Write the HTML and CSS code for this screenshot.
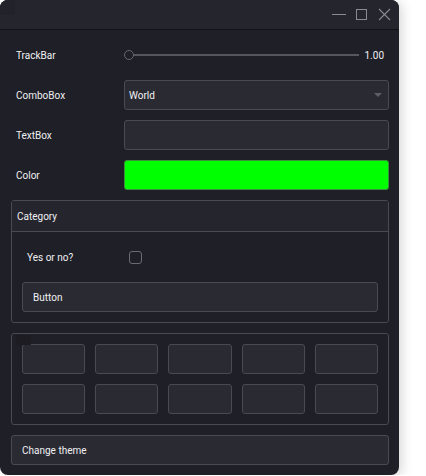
FILE: index.html
```html
<!DOCTYPE html>
<html>
<head>
<meta charset="utf-8">
<link rel="stylesheet" href="styles.css">
</head>
<body>
<div class="window">
  <div class="titlebar">
    <span class="app-icon"></span>
    <svg class="winctl" width="62" height="29" viewBox="0 0 62 29">
      <line x1="3" y1="14.5" x2="17" y2="14.5" stroke="#8a8a92" stroke-width="1"/>
      <rect x="27.5" y="9.5" width="10" height="10" fill="none" stroke="#8a8a92" stroke-width="1"/>
      <path d="M50 9 L61 20 M61 9 L50 20" stroke="#8a8a92" stroke-width="1.1" fill="none"/>
    </svg>
  </div>
  <div class="content">
    <div class="row">
      <span class="label">TrackBar</span>
      <div class="trackbar">
        <span class="thumb"></span>
        <span class="track"></span>
        <span class="value">1.00</span>
      </div>
    </div>
    <div class="row">
      <span class="label">ComboBox</span>
      <div class="box combo">
        <span>World</span>
        <svg class="arrow" width="8" height="5" viewBox="0 0 8 5"><path d="M0 0 L8 0 L4 4 Z" fill="#5e5e66"/></svg>
      </div>
    </div>
    <div class="row">
      <span class="label">TextBox</span>
      <div class="box"></div>
    </div>
    <div class="row">
      <span class="label">Color</span>
      <div class="box color"></div>
    </div>
    <div class="panel">
      <div class="panel-header">Category</div>
      <div class="panel-body">
        <div class="row inner">
          <span class="label">Yes or no?</span>
          <span class="check-wrap"><span class="checkbox"></span></span>
        </div>
        <div class="box btn">Button</div>
      </div>
    </div>
    <div class="panel">
      <span class="panel-mark"></span>
      <div class="panel-body grid">
        <div class="box"></div><div class="box"></div><div class="box"></div><div class="box"></div><div class="box"></div>
        <div class="box"></div><div class="box"></div><div class="box"></div><div class="box"></div><div class="box"></div>
      </div>
    </div>
    <div class="box btn theme">Change theme</div>
  </div>
</div>
</body>
</html>
```
FILE: styles.css
```css
html, body {
  margin: 0;
  padding: 0;
  background: #ffffff;
}
body {
  font-family: Roboto, "Noto Sans", sans-serif;
  font-size: 10px;
  color: #f0f0f2;
}
.window {
  width: 399px;
  height: 475px;
  box-sizing: border-box;
  background: #1f1f27;
  border-radius: 8px;
  box-shadow: 3px 2px 12px rgba(0, 0, 0, 0.16);
  overflow: hidden;
  display: flex;
  flex-direction: column;
}
.titlebar {
  height: 29px;
  background: #25252e;
  border-bottom: 1px solid #121216;
  display: flex;
  align-items: flex-start;
  justify-content: space-between;
  flex-shrink: 0;
}
.app-icon {
  width: 15px;
  height: 15px;
  background: #22222a;
}
.winctl {
  margin-right: 8px;
  display: block;
}
.content {
  flex: 1;
  padding: 10px 10px 10px 11px;
  display: flex;
  flex-direction: column;
  gap: 10px;
}
.row {
  display: grid;
  grid-template-columns: 113px 1fr;
  align-items: center;
  height: 30px;
}
.label {
  padding-left: 5px;
}
.box {
  height: 30px;
  box-sizing: border-box;
  border: 1px solid #4a4a52;
  border-radius: 3px;
  background: #2a2a33;
}
.trackbar {
  display: flex;
  align-items: center;
  height: 30px;
  padding-right: 5px;
}
.thumb {
  width: 10px;
  height: 10px;
  box-sizing: border-box;
  border: 1.5px solid #65656d;
  border-radius: 50%;
  background: #1f1f27;
  flex-shrink: 0;
}
.track {
  flex: 1;
  height: 2px;
  background: #56565e;
}
.value {
  margin-left: 6px;
}
.combo {
  display: flex;
  align-items: center;
  justify-content: space-between;
  padding: 0 6px 0 4px;
}
.arrow {
  display: block;
}
.color {
  background: #00ff00;
  border-color: #3b8f3b;
}
.panel {
  border: 1px solid #4a4a52;
  border-radius: 3px;
  position: relative;
}
.panel-mark {
  position: absolute;
  left: 4px;
  top: 1px;
  width: 15px;
  height: 10px;
  background: #1e1c23;
}
.panel-header {
  height: 30px;
  display: flex;
  align-items: center;
  padding-left: 5px;
  background: #25252e;
  border-bottom: 1px solid #4a4a52;
}
.panel-body {
  padding: 10px;
  display: flex;
  flex-direction: column;
  gap: 10px;
}
.row.inner {
  grid-template-columns: 107px 1fr;
}
.check-wrap {
  display: flex;
  align-items: center;
}
.checkbox {
  width: 13px;
  height: 13px;
  box-sizing: border-box;
  border: 1px solid #6a6a72;
  border-radius: 3px;
}
.btn {
  display: flex;
  align-items: center;
  padding-left: 10px;
}
.grid {
  display: grid;
  grid-template-columns: repeat(5, 1fr);
  gap: 10px;
}
```
